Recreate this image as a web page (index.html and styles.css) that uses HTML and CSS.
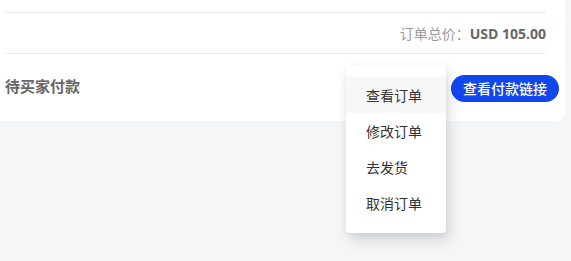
FILE: index.html
```html
<!DOCTYPE html>
<html lang="zh-CN">
<head>
<meta charset="utf-8">
<title>订单</title>
<link rel="stylesheet" href="styles.css">
</head>
<body>
<div class="page">
  <div class="card">
    <div class="row row-top"></div>
    <div class="row row-total">
      <span class="total-label">订单总价：</span><span class="total-value">USD 105.00</span>
    </div>
    <div class="row row-footer">
      <span class="status">待买家付款</span>
      <button class="btn-primary" type="button">查看付款链接</button>
    </div>
  </div>
  <ul class="menu">
    <li class="menu-item active">查看订单</li>
    <li class="menu-item">修改订单</li>
    <li class="menu-item">去发货</li>
    <li class="menu-item">取消订单</li>
  </ul>
</div>
</body>
</html>
```

FILE: styles.css
```css
* { box-sizing: border-box; }
html, body {
  margin: 0;
  padding: 0;
  background: #f5f6f8;
  font-family: "Open Sans", "Noto Sans CJK SC", sans-serif;
  font-size: 14px;
}
.page {
  position: relative;
  padding: 0 6px 0 0;
  height: 261px;
  overflow: hidden;
}
.card {
  margin: -30px 0 0 -16px;
  padding: 0 6px 0 21px;
  background: #fff;
  border-radius: 8px;
}
.row-top {
  height: 43px;
  margin-right: 13px;
  border-bottom: 1px solid #ebebeb;
}
.row-total {
  height: 41px;
  margin-right: 13px;
  display: flex;
  align-items: center;
  justify-content: flex-end;
  border-bottom: 1px solid #ebebeb;
}
.total-label {
  color: #9a9a9a;
  font-family: "Noto Sans CJK SC", sans-serif;
}
.total-value {
  color: #666;
  font-weight: 700;
}
.row-footer {
  display: flex;
  justify-content: space-between;
  align-items: flex-start;
  padding: 21px 0 19px;
}
.status {
  color: #666;
  font-weight: 700;
  font-size: 15px;
  line-height: 21px;
  font-family: "Noto Sans CJK SC", sans-serif;
}
.btn-primary {
  height: 27px;
  padding: 0 12px;
  border: none;
  border-radius: 14px;
  background: #1047ef;
  color: #fff;
  font-family: "Noto Sans CJK SC", sans-serif;
  font-size: 14px;
  font-weight: 500;
  line-height: 27px;
}
.menu {
  position: absolute;
  top: 65px;
  left: 346px;
  width: 100px;
  margin: 0;
  padding: 12px 0;
  list-style: none;
  background: #fff;
  border-radius: 4px;
  box-shadow: 3px 7px 14px rgba(0, 0, 0, 0.15), 0 2px 4px rgba(0, 0, 0, 0.04);
}
.menu-item {
  height: 36px;
  line-height: 36px;
  padding-left: 20px;
  color: #333;
  font-family: "Noto Sans CJK SC", sans-serif;
  font-size: 14px;
}
.menu-item.active {
  background: #f7f7f7;
}
```
